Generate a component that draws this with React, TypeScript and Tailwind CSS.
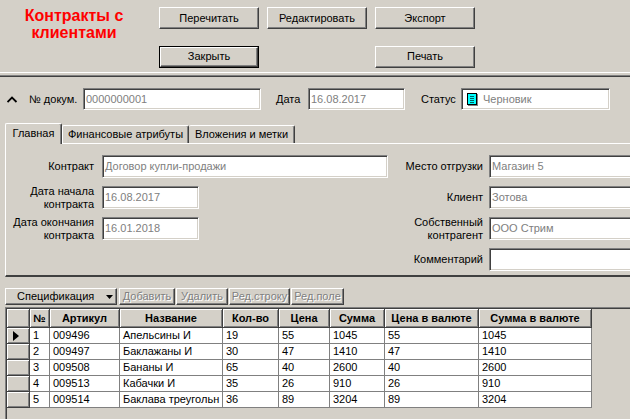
import React from "react";

const raised =
  "border border-t-white border-l-white border-r-[#404040] border-b-[#404040] shadow-[inset_-1px_-1px_0_#808080]";
const sunken =
  "border border-t-[#808080] border-l-[#808080] border-r-white border-b-white shadow-[inset_1px_1px_0_#404040,inset_-1px_-1px_0_#d4d0c8]";

function Btn({ children, isDefault }: { children: React.ReactNode; isDefault?: boolean }) {
  if (isDefault) {
    return (
      <div className="h-[22px] w-[100px] border border-black">
        <div className={`${raised} flex h-full w-full items-center justify-center bg-[#d4d0c8]`}>{children}</div>
      </div>
    );
  }
  return (
    <div className={`${raised} flex h-[22px] w-[100px] items-center justify-center bg-[#d4d0c8]`}>{children}</div>
  );
}

function Field({ value, className, icon }: { value?: string; className: string; icon?: boolean }) {
  return (
    <div className={`${sunken} flex items-center bg-white pl-[2px] text-[#808080] ${className}`}>
      {icon && (
        <svg width="11" height="13" viewBox="0 0 11 13" className="mr-[5px] ml-[3px] shrink-0">
          <rect x="1" y="1" width="10" height="12" fill="#808080" />
          <rect x="0.5" y="0.5" width="9" height="11" fill="#00ffff" stroke="#000" />
          <line x1="3" y1="3.5" x2="7" y2="3.5" stroke="#006060" />
          <line x1="3" y1="5.5" x2="7" y2="5.5" stroke="#006060" />
          <line x1="3" y1="7.5" x2="7" y2="7.5" stroke="#006060" />
          <line x1="3" y1="9.5" x2="7" y2="9.5" stroke="#006060" />
        </svg>
      )}
      <span className="whitespace-nowrap">{value}</span>
    </div>
  );
}

function ToolBtn({ children, w }: { children: React.ReactNode; w: string }) {
  return (
    <div className={`${raised} flex h-[17px] items-center justify-center bg-[#d4d0c8] text-[#808080] [text-shadow:1px_1px_0_#fff] ${w}`}>
      {children}
    </div>
  );
}

const cols = [
  { title: "", w: "w-[23px]" },
  { title: "№", w: "w-[20px]" },
  { title: "Артикул", w: "w-[70px]" },
  { title: "Название", w: "w-[103px]" },
  { title: "Кол-во", w: "w-[56px]" },
  { title: "Цена", w: "w-[51px]" },
  { title: "Сумма", w: "w-[55px]" },
  { title: "Цена в валюте", w: "w-[94px]" },
  { title: "Сумма в валюте", w: "w-[113px]" },
];

const rows = [
  ["1", "009496", "Апельсины И", "19", "55", "1045", "55", "1045"],
  ["2", "009497", "Баклажаны И", "30", "47", "1410", "47", "1410"],
  ["3", "009508", "Бананы И", "65", "40", "2600", "40", "2600"],
  ["4", "009513", "Кабачки И", "35", "26", "910", "26", "910"],
  ["5", "009514", "Баклава треугольн", "36", "89", "3204", "89", "3204"],
];

export default function App() {
  return (
    <div className="h-[419px] w-[630px] overflow-hidden bg-[#d4d0c8] font-['Liberation_Sans',Arial,sans-serif] text-[11px] leading-[13px] text-black">
      {/* Top bar */}
      <div className="flex h-[72px]">
        <div className="w-[148px] pt-[7px] text-center text-[16px] leading-[17px] font-bold text-[#ff0000]">
          Контракты с<br />клиентами
        </div>
        <div className="ml-[11px] grid grid-cols-[100px_100px_100px] gap-x-[8px] gap-y-[12px] pt-[7px]">
          <Btn>Перечитать</Btn>
          <Btn>Редактировать</Btn>
          <Btn>Экспорт</Btn>
          <Btn isDefault>Закрыть</Btn>
          <div />
          <Btn>Печать</Btn>
        </div>
      </div>
      <div className="h-px bg-white" />
      <div className="h-[2px]" />
      <div className="h-px bg-[#808080]" />
      <div className="h-px bg-[#404040]" />

      {/* Document header */}
      <div className="mt-[11px] flex h-[22px] items-center">
        <svg width="11" height="7" viewBox="0 0 11 7" className="ml-[7px]">
          <polyline points="0.5,6 5,1.5 9.5,6" fill="none" stroke="#000" strokeWidth="1.8" />
        </svg>
        <span className="ml-[11px] w-[54px]">№ докум.</span>
        <Field value="0000000001" className="h-[22px] w-[178px]" />
        <span className="ml-[15px] w-[32px]">Дата</span>
        <Field value="16.08.2017" className="h-[22px] w-[97px]" />
        <span className="ml-[16px] w-[40px]">Статус</span>
        <Field value="Черновик" icon className="h-[22px] w-[149px]" />
      </div>

      {/* Tabs */}
      <div className="mt-[13px] flex h-[20px] items-end pl-[5px]">
        <div className="relative z-10 mb-[-1px] flex h-[21px] w-[57px] items-center justify-center rounded-t-[2px] border-t border-l border-r border-t-white border-l-white border-r-[#404040] bg-[#d4d0c8] pb-[2px] shadow-[inset_-1px_0_0_#808080]">
          Главная
        </div>
        <div className="flex h-[18px] w-[127px] items-center justify-center rounded-t-[2px] border-t border-l border-r border-t-white border-l-white border-r-[#404040] shadow-[inset_-1px_0_0_#808080]">
          Финансовые атрибуты
        </div>
        <div className="flex h-[18px] w-[106px] items-center justify-center rounded-t-[2px] border-t border-r border-t-white border-r-[#404040] shadow-[inset_-1px_0_0_#808080]">
          Вложения и метки
        </div>
      </div>
      <div className="ml-[5px] flex h-[134px] w-[640px] border-t border-l border-b-2 border-t-white border-l-white border-b-[#404040] pt-[11px]">
        <div className="flex flex-col gap-[8px]">
          <div className="flex h-[23px] items-center">
            <div className="w-[88px] text-right">Контракт</div>
            <Field value="Договор купли-продажи" className="ml-[8px] h-[23px] w-[286px]" />
          </div>
          <div className="flex h-[23px] items-center">
            <div className="w-[88px] text-right">
              Дата начала
              <br />
              контракта
            </div>
            <Field value="16.08.2017" className="ml-[8px] h-[23px] w-[97px]" />
          </div>
          <div className="flex h-[23px] items-center">
            <div className="w-[88px] text-right">
              Дата окончания
              <br />
              контракта
            </div>
            <Field value="16.01.2018" className="ml-[8px] h-[23px] w-[97px]" />
          </div>
        </div>
        <div className="flex flex-col gap-[8px]">
          <div className="flex h-[23px] items-center">
            <div className="w-[95px] text-right">Место отгрузки</div>
            <Field value="Магазин 5" className="ml-[6px] h-[23px] w-[160px]" />
          </div>
          <div className="flex h-[23px] items-center">
            <div className="w-[95px] text-right">Клиент</div>
            <Field value="Зотова" className="ml-[6px] h-[23px] w-[160px]" />
          </div>
          <div className="flex h-[23px] items-center">
            <div className="w-[95px] text-right">
              Собственный
              <br />
              контрагент
            </div>
            <Field value="ООО Стрим" className="ml-[6px] h-[23px] w-[160px]" />
          </div>
          <div className="flex h-[23px] items-center">
            <div className="w-[95px] text-right">Комментарий</div>
            <Field value="" className="ml-[6px] h-[23px] w-[160px]" />
          </div>
        </div>
      </div>

      {/* Toolbar */}
      <div className="mt-[11px] flex h-[17px] gap-[1px] pl-[5px]">
        <div className={`${raised} mr-[1px] flex h-[17px] w-[112px] items-center bg-[#d4d0c8] pl-[11px]`}>
          <span>Спецификация</span>
          <svg width="7" height="4" viewBox="0 0 7 4" className="ml-[12px]">
            <polygon points="0,0 7,0 3.5,4" fill="#000" />
          </svg>
        </div>
        <ToolBtn w="w-[56px]">Добавить</ToolBtn>
        <ToolBtn w="w-[52px]">Удалить</ToolBtn>
        <ToolBtn w="w-[61px]">Ред.строку</ToolBtn>
        <ToolBtn w="w-[53px]">Ред.поле</ToolBtn>
      </div>

      {/* Grid */}
      <div className="mt-[2px] ml-[5px] h-[120px] border-t border-l border-t-[#808080] border-l-[#808080] pt-px pl-px shadow-[inset_1px_1px_0_#404040]">
        <div className="flex">
          {cols.map((c, i) => (
            <div
              key={i}
              className={`flex h-[19px] shrink-0 items-center justify-center border-r border-b border-r-[#404040] border-b-[#404040] bg-[#d4d0c8] font-bold shadow-[inset_1px_1px_0_#fff,inset_-1px_-1px_0_#808080] ${c.w}`}
            >
              {c.title}
            </div>
          ))}
        </div>
        {rows.map((r, ri) => (
          <div key={ri} className="flex">
            <div className="flex h-[16px] w-[23px] shrink-0 items-center border-r border-b border-r-[#404040] border-b-[#404040] bg-[#d4d0c8] pl-[6px] shadow-[inset_1px_1px_0_#fff,inset_-1px_-1px_0_#808080]">
              {ri === 0 && (
                <svg width="6" height="10" viewBox="0 0 6 10">
                  <polygon points="0,0 6,5 0,10" fill="#000" />
                </svg>
              )}
            </div>
            {r.map((v, ci) => (
              <div
                key={ci}
                className={`flex h-[16px] shrink-0 items-center overflow-hidden whitespace-nowrap border-r border-b border-[#808080] bg-white pl-[3px] ${cols[ci + 1].w}`}
              >
                {v}
              </div>
            ))}
          </div>
        ))}
      </div>
    </div>
  );
}
